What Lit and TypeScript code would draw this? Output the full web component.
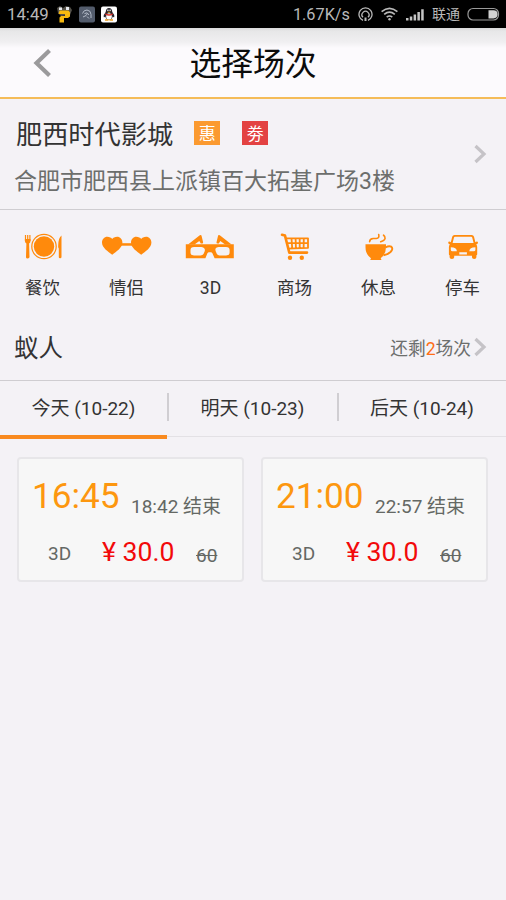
import { LitElement, html, css, svg } from "lit";
import { customElement } from "lit/decorators.js";

const amenityIcons = {
  dining: svg`
    <circle cx="29" cy="16.5" r="12.2" fill="none" stroke="#ff8a0c" stroke-width="1.2"/>
    <circle cx="29" cy="16.5" r="10.2" fill="#ff8a0c"/>
    <path d="M10.5 5v6M12.7 5v6M14.9 5v6" stroke="#ff8a0c" stroke-width="1.2" fill="none"/>
    <path d="M9.900 9h5.600v2q0 1.800-1.400 2.500l.4 13.500q0 1.400-1.800 1.400T11 27l.4-13.500q-1.500-.7-1.500-2.500z" fill="#ff8a0c"/>
    <path d="M46.500 5.500v21.500q0 1.300-1.400 1.300T43.800 27v-8.500q-.8-.5-.6-3 .2-8 3.300-10z" fill="#ff8a0c"/>`,
  couple: svg`
    <path d="M22 13.200h11v2.500H22z" fill="#ff8a0c"/>
    <path d="M13.200 24.800C9 21.500 3 18 3 12.600c0-3.400 2.300-5.800 5.300-5.800 2.200 0 4 .9 4.900 2.300.9-1.400 2.700-2.300 4.900-2.300 3 0 5.300 2.400 5.300 5.800 0 5.400-6 8.900-10.200 12.200z" fill="#ff8a0c"/>
    <path d="M42.200 24.800C38 21.500 32 18 32 12.600c0-3.400 2.300-5.800 5.300-5.800 2.200 0 4 .9 4.900 2.300.9-1.400 2.700-2.300 4.900-2.300 3 0 5.300 2.400 5.300 5.800 0 5.400-6 8.900-10.200 12.200z" fill="#ff8a0c"/>`,
  glasses: svg`
    <path fill-rule="evenodd" fill="#ff8a0c" d="M2.800 14.200h48v14.100H31.600l-2.200-5q-.5-1-1.500-1h-2q-1 0-1.500 1l-2 5H2.800zM11 17q-3.500 0-3.500 3v2.400q0 3 3.500 3h6.500q2.200 0 3-1.400l1.200-2.800q.5-1.600-.3-2.700-1-1.500-3-1.500zM35.600 17q-2.300 0-3 1.500-.5 1 .1 2.700l1.200 2.800q.8 1.400 2.700 1.400h6.500q3.500 0 3.500-3v-2.400q0-3-3.500-3z"/>
    <path fill="#ff8a0c" d="M5 14.600L16.800 5.300q1.500-.9 1.800.7l1.500 6.200q.2 1.200-1 1.400-1.500.1-1.900-1.200l-.9-1.500-4.800 3.700zM48.600 14.600L36.800 5.300q-1.500-.9-1.800.7l-1.500 6.200q-.2 1.200 1 1.400 1.500.1 1.900-1.200l.9-1.500 4.800 3.700z"/>`,
  cart: svg`
    <path d="M15 4.800l3 .8 4.300 17h17.700" fill="none" stroke="#ff8a0c" stroke-width="2.600" stroke-linejoin="round" stroke-linecap="round"/>
    <path d="M19 8.300h22v9.500l-20 .8M20.200 13.200h20.600M24.500 8.300l.7 10M28.600 8.300l.3 10M32.700 8.300v10M36.800 8.300l-.2 10" fill="none" stroke="#ff8a0c" stroke-width="1.800" stroke-linejoin="round"/>
    <circle cx="23" cy="27.700" r="2.200" fill="#ff8a0c"/><circle cx="34.800" cy="27.700" r="2.200" fill="#ff8a0c"/>`,
  cup: svg`
    <path d="M14.500 14.300h20.500v3q0 7-5.300 11l.8 1.700H19.200l.8-1.700q-5.500-4-5.500-11z" fill="#ff8a0c"/>
    <path d="M34.500 17.500q3.500-2 5.800-.8 2.300 2.200-.8 5.300-2.800 2.600-6.900 3.200" fill="none" stroke="#ff8a0c" stroke-width="1.900"/>
    <path d="M18.600 11.700q.2-3 3.700-3.200h3q3.400-.3 2.400-4M29.700 11.700q5-1.500 4.300-4.200-.3-1.300-1.500-2.300" fill="none" stroke="#ff8a0c" stroke-width="1.600" stroke-linecap="round"/>`,
  car: svg`
    <path fill-rule="evenodd" fill="#ff8a0c" d="M19.500 5h17.200q1.800 0 2.300 1.800l1.400 5.400 1.300-.6q1.300 0 1.300 1.200t-1.700 1.500q.9 1.300.9 3v7q0 1-.8 1v2q0 1.700-2.200 1.700T37 27.300v-1.500H19.200v1.500q0 1.700-2.300 1.700t-2.300-1.700v-2q-.7 0-.7-1v-7q0-1.700.9-3-1.600-.3-1.600-1.500t1.300-1.200l1.300.6 1.400-5.400Q17.700 5 19.500 5zM20 6.800q-.8 0-1 .8l-1.400 5.300h21L37.200 7.600Q37 6.800 36.200 6.800zM15.800 17.200v2.600q0 1.400 1.200 1.400h4.900q-.2-4-6.100-4zM40.400 17.200v2.600q0 1.400-1.200 1.400h-4.900q.2-4 6.100-4zM24.300 22.300v2.200h7.600v-2.200z"/>`,
};

const amenities = [
  { icon: amenityIcons.dining, label: "餐饮" },
  { icon: amenityIcons.couple, label: "情侣" },
  { icon: amenityIcons.glasses, label: "3D" },
  { icon: amenityIcons.cart, label: "商场" },
  { icon: amenityIcons.cup, label: "休息" },
  { icon: amenityIcons.car, label: "停车" },
];

const days = ["今天 (10-22)", "明天 (10-23)", "后天 (10-24)"];

const shows = [
  { start: "16:45", end: "18:42 结束", kind: "3D", price: "¥ 30.0", original: "60" },
  { start: "21:00", end: "22:57 结束", kind: "3D", price: "¥ 30.0", original: "60" },
];

@customElement("status-bar")
class StatusBar extends LitElement {
  static styles = css`
    :host { display: flex; align-items: center; height: 28px; background: #000; color: #b9b9b9; line-height: 28px; white-space: nowrap; }
    svg { display: block; flex: none; }
    .clock { box-sizing: border-box; width: 56px; padding-left: 7px; font-size: 16.800px; }
    .apps { display: flex; gap: 6px; flex: 1; }
    .speed { padding-top: 1px; font-size: 16.300px; margin-right: 8px; }
    .ring { margin-right: 8px; }
    .wifi { margin-right: 8px; }
    .signal { margin-right: 8px; }
    .carrier { font-size: 14px; margin-right: 7px; }
    .battery { margin-right: 5px; }
  `;
  render() {
    return html`
      <div class="clock">14:49</div>
      <div class="apps">
        <svg width="17" height="17" viewBox="0 0 17 17">
          <path d="M1 2l3-2 3 2 3-2 4 1 2 3-2 5-9 1-3-3z" fill="#55524a"/>
          <path d="M3 1.500h3v2.500H3zM10 1h3v3h-3z" fill="#e6e8ee"/>
          <path d="M3.500 4.500h9l1.500 2v4l-2 1.500H8v4.500H3.500v-5l1.500-1.500h4V8H2.500z" fill="#f7b90f"/>
        </svg>
        <svg width="16" height="17" viewBox="0 0 16 17">
          <rect y="0.500" width="16" height="16" rx="2" fill="#535c6c"/>
          <path d="M3.500 7.500q1-3.500 4.500-3.500 4 .5 4 4.500v3.500M5.500 7.500q3-2 4.500 1.500M4 11l3-1.500 1.500-2M8 10.500l2 2" stroke="#b3bbc8" fill="none" stroke-width="1"/>
        </svg>
        <svg width="16" height="17" viewBox="0 0 16 17">
          <rect y="0.500" width="16" height="16" rx="2" fill="#fff"/>
          <path d="M8 2q3 0 3.300 4 2.200 2.500 2 5-.6.800-1.600-.5Q11 14 8 14t-3.700-3.500q-1 1.300-1.600.5-.2-2.500 2-5Q5 2 8 2z" fill="#26242c"/>
          <ellipse cx="8" cy="10.500" rx="2.800" ry="3.200" fill="#fff"/>
          <path d="M4.300 7.300q3.700 2 7.400 0v1.500q-3.700 1.800-7.400 0z" fill="#d8352b"/>
          <path d="M6 5.700h4l-2 1.300zM4 13.300h3.500v1.400H4zM8.500 13.300H12v1.400H8.500z" fill="#f0a01c"/>
          <circle cx="6.900" cy="4.300" r=".8" fill="#fff"/><circle cx="9.100" cy="4.300" r=".8" fill="#fff"/>
        </svg>
      </div>
      <div class="speed">1.67K/s</div>
      <svg class="ring" width="15" height="15" viewBox="0 0 15 15" fill="none" stroke="#b9b9b9" stroke-width="1.300">
        <path d="M5 13.400a6.500 6.500 0 1 1 5 0"/><path d="M5 10.300a3.500 3.500 0 1 1 5 0"/>
        <path d="M7.500 10.500v3.500" stroke-width="2"/>
      </svg>
      <svg class="wifi" width="17" height="14" viewBox="0 0 17 14" fill="none" stroke="#b9b9b9" stroke-width="1.700">
        <path d="M.6 4.600q7.900-6.600 15.800 0M3.200 7.400q5.300-4.400 10.600 0M5.700 10.100q2.800-2.200 5.600 0"/>
        <circle cx="8.500" cy="12.200" r="1.200" fill="#b9b9b9" stroke="none"/>
      </svg>
      <svg class="signal" width="18" height="13" viewBox="0 0 18 13" fill="#c4c4c4">
        <path d="M0 10h2.500v2.500H0zM3.800 8.500h2.500v4H3.800zM7.600 6.500h2.500v6H7.600zM11.400 4h2.500v8.500h-2.500zM15.200 1.200h2.500v11.300h-2.500z"/>
      </svg>
      <div class="carrier">联通</div>
      <svg class="battery" width="34" height="14" viewBox="0 0 34 14">
        <rect x="1" y="1.500" width="30.500" height="11.500" rx="5" fill="none" stroke="#9a9a9a" stroke-width="1.200"/>
        <path d="M21.500 3.200h5a4 4 0 0 1 0 8.200h-5z" fill="#d2d2d2"/>
      </svg>
    `;
  }
}

@customElement("show-card")
class ShowCard extends LitElement {
  static properties = { show: { attribute: false } };
  declare show: (typeof shows)[number];
  static styles = css`
    :host { display: block; box-sizing: border-box; width: 227px; height: 125px; border: 2px solid #e7e6e9; border-radius: 4px; background: #f7f7f7; white-space: nowrap; color: #646864; font-size: 19px; }
    .row { display: flex; align-items: flex-start; line-height: 40px; }
    .times { height: 62px; padding: 17px 0 0 13px; box-sizing: border-box; }
    .start { width: 99px; font-size: 35.200px; color: #fd970f; }
    .end { margin-top: 11px; }
    .prices { padding-left: 29px; }
    .kind { width: 54px; margin-top: 13px; }
    .price { width: 94px; margin-top: 11px; font-size: 26.600px; color: #f20a0a; }
    .original { margin-top: 15px; text-decoration: line-through; }
  `;
  render() {
    const s = this.show;
    return html`
      <div class="row times"><div class="start">${s.start}</div><div class="end">${s.end}</div></div>
      <div class="row prices"><div class="kind">${s.kind}</div><div class="price">${s.price}</div><div class="original">${s.original}</div></div>
    `;
  }
}

@customElement("app-root")
class AppRoot extends LitElement {
  static styles = css`
    :host { display: block; height: 900px; overflow: hidden; background: #f4f2f6; font-family: Roboto, "Noto Sans CJK SC", sans-serif; color: #333; white-space: nowrap; }
    svg { display: block; flex: none; }
    .header { display: grid; grid-template-columns: 85px 1fr 85px; align-items: center; box-sizing: border-box; height: 71px; border-bottom: 2px solid #f5bc59; background: linear-gradient(#d9d9da 0, #e7e7e8 3px, #f0eff1 14px, #fcfafd 20px); }
    .back { margin: 0 0 0 32px; }
    .title { padding-top: 2px; font-size: 31.800px; line-height: 44px; color: #0b0b0b; text-align: center; }
    .cinema { display: flex; align-items: center; box-sizing: border-box; height: 111px; padding: 0 18px 0 14px; border-bottom: 1px solid #cfcdd1; }
    .info { flex: 1; padding-top: 4px; }
    .name { display: flex; align-items: center; height: 46px; padding-left: 2px; font-size: 26.200px; }
    .tag { width: 26px; height: 24px; font-size: 17px; line-height: 26px; text-align: center; color: #fff; }
    .deal { margin-left: 21px; background: #fb9a30; }
    .coupon { margin-left: 22px; background: #e34242; }
    .address { height: 44px; padding-top: 3px; font-size: 23px; line-height: 46px; color: #6c6e6c; }
    .amenities { display: grid; grid-template-columns: repeat(6, 84px); height: 105px; padding: 20px 0 0 1px; box-sizing: border-box; }
    .amenity { display: flex; flex-direction: column; align-items: center; font-size: 17.500px; line-height: 26px; gap: 13px; }
    .label { padding-right: 1px; }
    .film { display: flex; align-items: center; box-sizing: border-box; height: 66px; padding: 0 18px 2px 14px; border-bottom: 1px solid #cfcdd1; }
    .film-name { flex: 1; font-size: 24.500px; }
    .remaining { font-size: 17.700px; color: #6c6e6c; margin-right: 3px; }
    .count { color: #ff6d14; }
    .days { display: grid; grid-template-columns: 167px 170px 169px; height: 58px; }
    .day { display: flex; align-items: center; justify-content: center; position: relative; box-sizing: border-box; height: 56px; padding: 0 0 5px 1px; border-bottom: 1px solid #e3e1e5; font-size: 19px; }
    .day + .day::before { content: ""; position: absolute; left: 0; top: 12px; width: 2px; height: 28px; background: #d0ced2; }
    .day.active { height: 58px; padding: 0 0 4px; border-bottom: 4px solid #f98a1f; }
    .shows { display: flex; gap: 17px; padding: 18px 17px; }
  `;
  render() {
    return html`
      <status-bar></status-bar>
      <div class="header">
        <svg class="back" width="20" height="30" viewBox="0 0 20 30"><path d="M17.500 2.500L4.500 15l13 12.500" fill="none" stroke="#9b9a9c" stroke-width="4.200"/></svg>
        <div class="title">选择场次</div>
      </div>
      <div class="cinema">
        <div class="info">
          <div class="name">肥西时代影城<div class="tag deal">惠</div><div class="tag coupon">劵</div></div>
          <div class="address">合肥市肥西县上派镇百大拓基广场3楼</div>
        </div>
        <svg width="15" height="22" viewBox="0 0 15 22"><path d="M2.500 3l8.500 8-8.500 8" fill="none" stroke="#c5c3c7" stroke-width="3.200"/></svg>
      </div>
      <div class="amenities">
        ${amenities.map((a) => html`<div class="amenity"><svg width="56" height="32" viewBox="0 0 56 32">${a.icon}</svg><div class="label">${a.label}</div></div>`)}
      </div>
      <div class="film">
        <div class="film-name">蚁人</div>
        <div class="remaining">还剩<span class="count">2</span>场次</div>
        <svg width="14" height="22" viewBox="0 0 14 22"><path d="M1.500 3l8.500 8-8.500 8" fill="none" stroke="#c5c3c7" stroke-width="3.200"/></svg>
      </div>
      <div class="days">${days.map((d, i) => html`<div class="day ${i === 0 ? "active" : ""}">${d}</div>`)}</div>
      <div class="shows">${shows.map((s) => html`<show-card .show=${s}></show-card>`)}</div>
    `;
  }
}
